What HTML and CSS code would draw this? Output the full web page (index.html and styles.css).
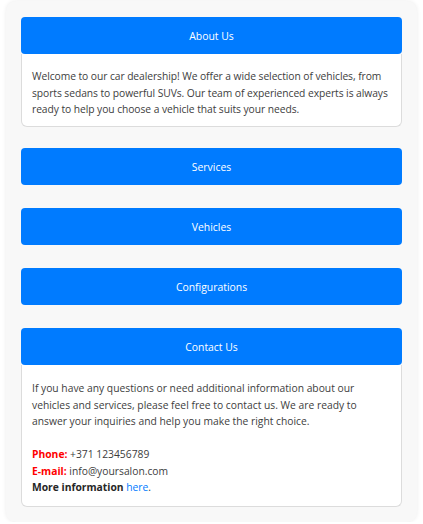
FILE: index.html
```html
<!DOCTYPE html>
<html lang="en">
<head>
<meta charset="utf-8">
<title>Car Dealership</title>
<link rel="stylesheet" href="styles.css">
</head>
<body>
<div class="panel">
  <section class="item item-open">
    <button class="item-head">About Us</button>
    <div class="item-body body-about">
      <p>Welcome to our car dealership! We offer a wide selection of vehicles, from sports sedans to powerful SUVs. Our team of experienced experts is always ready to help you choose a vehicle that suits your needs.</p>
    </div>
  </section>
  <section class="item">
    <button class="item-head">Services</button>
  </section>
  <section class="item">
    <button class="item-head">Vehicles</button>
  </section>
  <section class="item">
    <button class="item-head">Configurations</button>
  </section>
  <section class="item item-last">
    <button class="item-head">Contact Us</button>
    <div class="item-body body-contact">
      <p>If you have any questions or need additional information about our vehicles and services, please feel free to contact us. We are ready to answer your inquiries and help you make the right choice.</p>
      <p class="contacts"><strong class="label">Phone:</strong> +371 123456789<br>
      <strong class="label">E-mail:</strong> info@yoursalon.com<br>
      <strong class="more">More information</strong> <a class="link" href="#">here</a>.</p>
    </div>
  </section>
</div>
</body>
</html>
```

FILE: styles.css
```css
* { box-sizing: border-box; }
html, body { margin: 0; background: #ffffff; }
body {
  padding: 1px 6px 0;
  font-family: "Open Sans", "Noto Sans", sans-serif;
  font-size: 10.3px;
  line-height: 16.5px;
  color: #3d3d3d;
}
.panel {
  background: #f8f8f8;
  border-radius: 10px;
  box-shadow: 0 0 4px rgba(0,0,0,0.08);
  padding: 16px 15px 16px;
  height: 521px;
}
.item { margin-bottom: 23.4px; }
.item-open { margin-bottom: 21px; }
.item-last { margin-bottom: 0; }
.item-head {
  display: block;
  width: 100%;
  height: 36.7px;
  border: none;
  border-radius: 4px;
  background: #007bff;
  color: #ffffff;
  font-family: inherit;
  font-size: 10.4px;
  line-height: 16.5px;
  padding: 1px 0 0;
  text-align: center;
  cursor: pointer;
}
.item-body {
  background: #ffffff;
  border: 1px solid #dcdcdc;
  border-top: none;
  border-radius: 0 0 6px 6px;
  padding: 14.5px 10px 8.5px 10px;
}
.body-about p { letter-spacing: -0.07px; }
.body-contact { padding-top: 15.3px; padding-bottom: 10.3px; }
.item-body p { margin: 0; }
.contacts { margin-top: 16.5px !important; }
.label { color: #ff0000; font-weight: 700; }
.more { color: #262626; font-weight: 700; }
.link { color: #007bff; text-decoration: none; }
```
